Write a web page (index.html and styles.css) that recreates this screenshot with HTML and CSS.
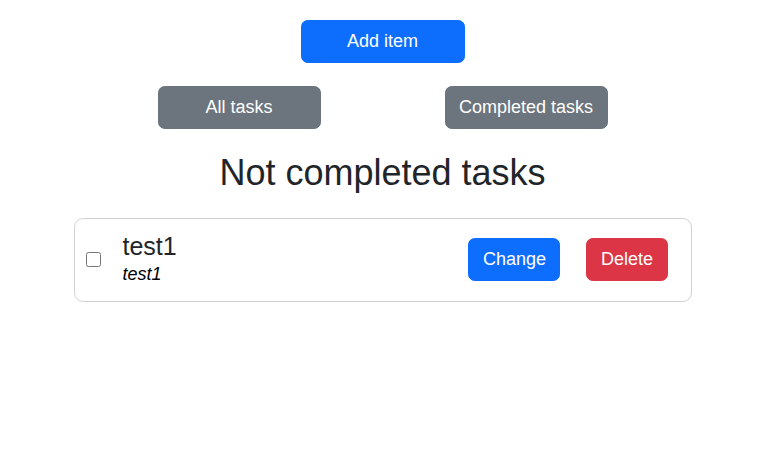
FILE: index.html
```html
<!DOCTYPE html>
<html lang="en">
<head>
<meta charset="utf-8">
<title>Tasks</title>
<link rel="stylesheet" href="styles.css">
</head>
<body>
<div class="page">
  <div class="top-row">
    <button class="btn btn-primary btn-add">Add item</button>
  </div>
  <div class="filter-row">
    <button class="btn btn-secondary btn-filter">All tasks</button>
    <button class="btn btn-secondary btn-filter">Completed tasks</button>
  </div>
  <h2 class="heading">Not completed tasks</h2>
  <div class="card">
    <input type="checkbox" class="check">
    <div class="task-text">
      <div class="task-title">test1</div>
      <div class="task-desc">test1</div>
    </div>
    <div class="actions">
      <button class="btn btn-primary">Change</button>
      <button class="btn btn-danger">Delete</button>
    </div>
  </div>
</div>
</body>
</html>
```

FILE: styles.css
```css
html, body {
  margin: 0;
  padding: 0;
  background: #ffffff;
}

body {
  font-family: "Liberation Sans", Arial, sans-serif;
  color: #212529;
  font-size: 18px;
  line-height: 1.5;
}

.page {
  width: 765px;
  display: flex;
  flex-direction: column;
  align-items: center;
  padding-top: 20px;
}

.btn {
  font-family: "Liberation Sans", Arial, sans-serif;
  font-size: 18px;
  line-height: 27px;
  padding: 6.75px 13.5px;
  border: 1px solid transparent;
  border-radius: 6.75px;
  color: #ffffff;
  cursor: pointer;
  box-sizing: border-box;
  height: 42.5px;
  white-space: nowrap;
}

.btn-primary {
  background: #0d6efd;
  border-color: #0d6efd;
}

.btn-secondary {
  background: #6c757d;
  border-color: #6c757d;
}

.btn-danger {
  background: #dc3545;
  border-color: #dc3545;
}

.btn-add {
  width: 164px;
}

.filter-row {
  display: flex;
  gap: 124px;
  margin-top: 23.5px;
}

.btn-filter {
  width: 163px;
  padding-left: 0;
  padding-right: 0;
}

.heading {
  margin: 22px 0 0;
  font-size: 36px;
  font-weight: 400;
  line-height: 1.2;
  color: #212529;
}

.card {
  margin-top: 24px;
  width: 618px;
  box-sizing: border-box;
  border: 1px solid #d2d2d2;
  border-radius: 9px;
  padding: 13px 23px 13px 11px;
  display: flex;
  align-items: center;
}

.check {
  width: 15px;
  height: 15px;
  margin: 0 22px 0 0;
  flex: none;
}

.task-text {
  flex: 1;
}

.task-title {
  font-size: 25px;
  line-height: 29px;
  color: #212529;
}

.task-desc {
  font-size: 18px;
  line-height: 27px;
  font-style: italic;
  color: #000000;
}

.actions {
  display: flex;
  gap: 26px;
}
```
